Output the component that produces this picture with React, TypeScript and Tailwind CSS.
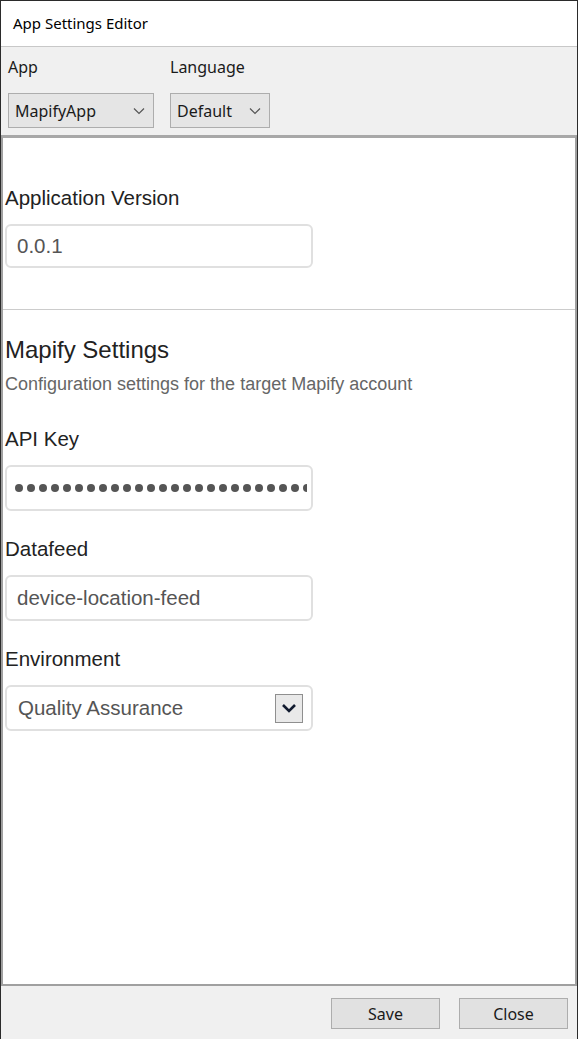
import { useState } from 'react';

const ui = { fontFamily: '"Noto Sans", "Open Sans", sans-serif' };
const web = { fontFamily: '"Liberation Sans", Arial, sans-serif' };

function ToolSelect({ value, width }: { value: string; width: string }) {
  return (
    <div
      className={`${width} flex h-[35px] items-center justify-between border border-[#adadad] bg-[#e5e5e5] pl-[6px] pr-[8px] text-[16px] text-[#1a1a1a]`}
      style={ui}
    >
      <span>{value}</span>
      <svg width="12" height="8" viewBox="0 0 12 8" fill="none">
        <path d="M1 1.5 6 6.5 11 1.5" stroke="#555" strokeWidth="1.2" />
      </svg>
    </div>
  );
}

function Field({ label, children, first }: { label: string; children: React.ReactNode; first?: boolean }) {
  return (
    <div className={first ? '' : 'mt-[26px]'}>
      <div className="text-[20.5px] leading-[23px] text-[#222]">{label}</div>
      <div className="mt-[15px]">{children}</div>
    </div>
  );
}

function TextBox({ value }: { value: string }) {
  return (
    <div className="flex h-[46px] w-[308px] items-center rounded-[6px] border-2 border-[#e0e0e0] bg-white pl-[10px] text-[20.5px] text-[#555]">
      {value}
    </div>
  );
}

export default function App() {
  const [env] = useState('Quality Assurance');
  const dots = Array.from({ length: 26 });

  return (
    <div className="flex h-[1039px] w-[578px] flex-col overflow-hidden border-x border-t border-[#2b2b2b] bg-[#f0f0f0]">
      <div className="flex h-[46px] items-center border-b border-[#c8c8c8] bg-white pl-[12px] text-[15px] text-black" style={ui}>
        App Settings Editor
      </div>

      <div className="flex h-[88px] gap-[16px] px-[7px] pt-[8px]" style={ui}>
        <div className="flex flex-col">
          <span className="h-[38px] text-[16px] leading-[24px] text-[#1a1a1a]">App</span>
          <ToolSelect value="MapifyApp" width="w-[146px]" />
        </div>
        <div className="flex flex-col">
          <span className="h-[38px] text-[16px] leading-[24px] text-[#1a1a1a]">Language</span>
          <ToolSelect value="Default" width="w-[100px]" />
        </div>
      </div>

      <div className="flex-1 border-x-2 border-b-2 border-t-[3px] border-x-[#a0a0a0] border-b-[#a0a0a0] border-t-[#a8a8a8] bg-white" style={web}>
        <div className="px-[2px] pt-[48px] pb-[41px]">
          <Field label="Application Version" first>
            <div className="flex h-[44px] w-[308px] items-center rounded-[6px] border-2 border-[#e0e0e0] pl-[10px] text-[20.5px] text-[#555]">
              0.0.1
            </div>
          </Field>
        </div>
        <div className="h-px bg-[#cccccc]" />
        <div className="px-[2px] pt-[26px]">
          <div className="text-[24px] leading-[28px] text-[#222]">Mapify Settings</div>
          <div className="mt-[10px] text-[18px] leading-[21px] text-[#666]">
            Configuration settings for the target Mapify account
          </div>
          <div className="mt-[32px]">
            <Field label="API Key" first>
              <div className="flex h-[46px] w-[308px] items-center overflow-hidden rounded-[6px] border-2 border-[#e0e0e0] pl-[8px]">
                <div className="flex w-[292px] gap-[4px] overflow-hidden">
                  {dots.map((_, i) => (
                    <span key={i} className="h-[8px] w-[8px] shrink-0 rounded-full bg-[#555]" />
                  ))}
                </div>
              </div>
            </Field>
          </div>
          <Field label="Datafeed">
            <TextBox value="device-location-feed" />
          </Field>
          <Field label="Environment">
            <div className="flex h-[46px] w-[308px] items-center justify-between rounded-[6px] border-2 border-[#e0e0e0] pl-[11px] pr-[8px] text-[20.5px] text-[#555]">
              <span>{env}</span>
              <div className="flex h-[29px] w-[28px] items-center justify-center border border-[#8f8f8f] bg-[#e9e9e9]">
                <svg width="16" height="10" viewBox="0 0 16 10" fill="none">
                  <path d="M2 2 8 8 14 2" stroke="#111a2e" strokeWidth="2.6" />
                </svg>
              </div>
            </div>
          </Field>
        </div>
      </div>

      <div className="flex h-[53px] justify-end gap-[19px] pr-[9px] pt-[12px]" style={ui}>
        <button className="h-[31px] w-[109px] border border-[#adadad] bg-[#e1e1e1] text-[16px] text-[#1a1a1a]">Save</button>
        <button className="h-[31px] w-[109px] border border-[#adadad] bg-[#e1e1e1] text-[16px] text-[#1a1a1a]">Close</button>
      </div>
    </div>
  );
}
